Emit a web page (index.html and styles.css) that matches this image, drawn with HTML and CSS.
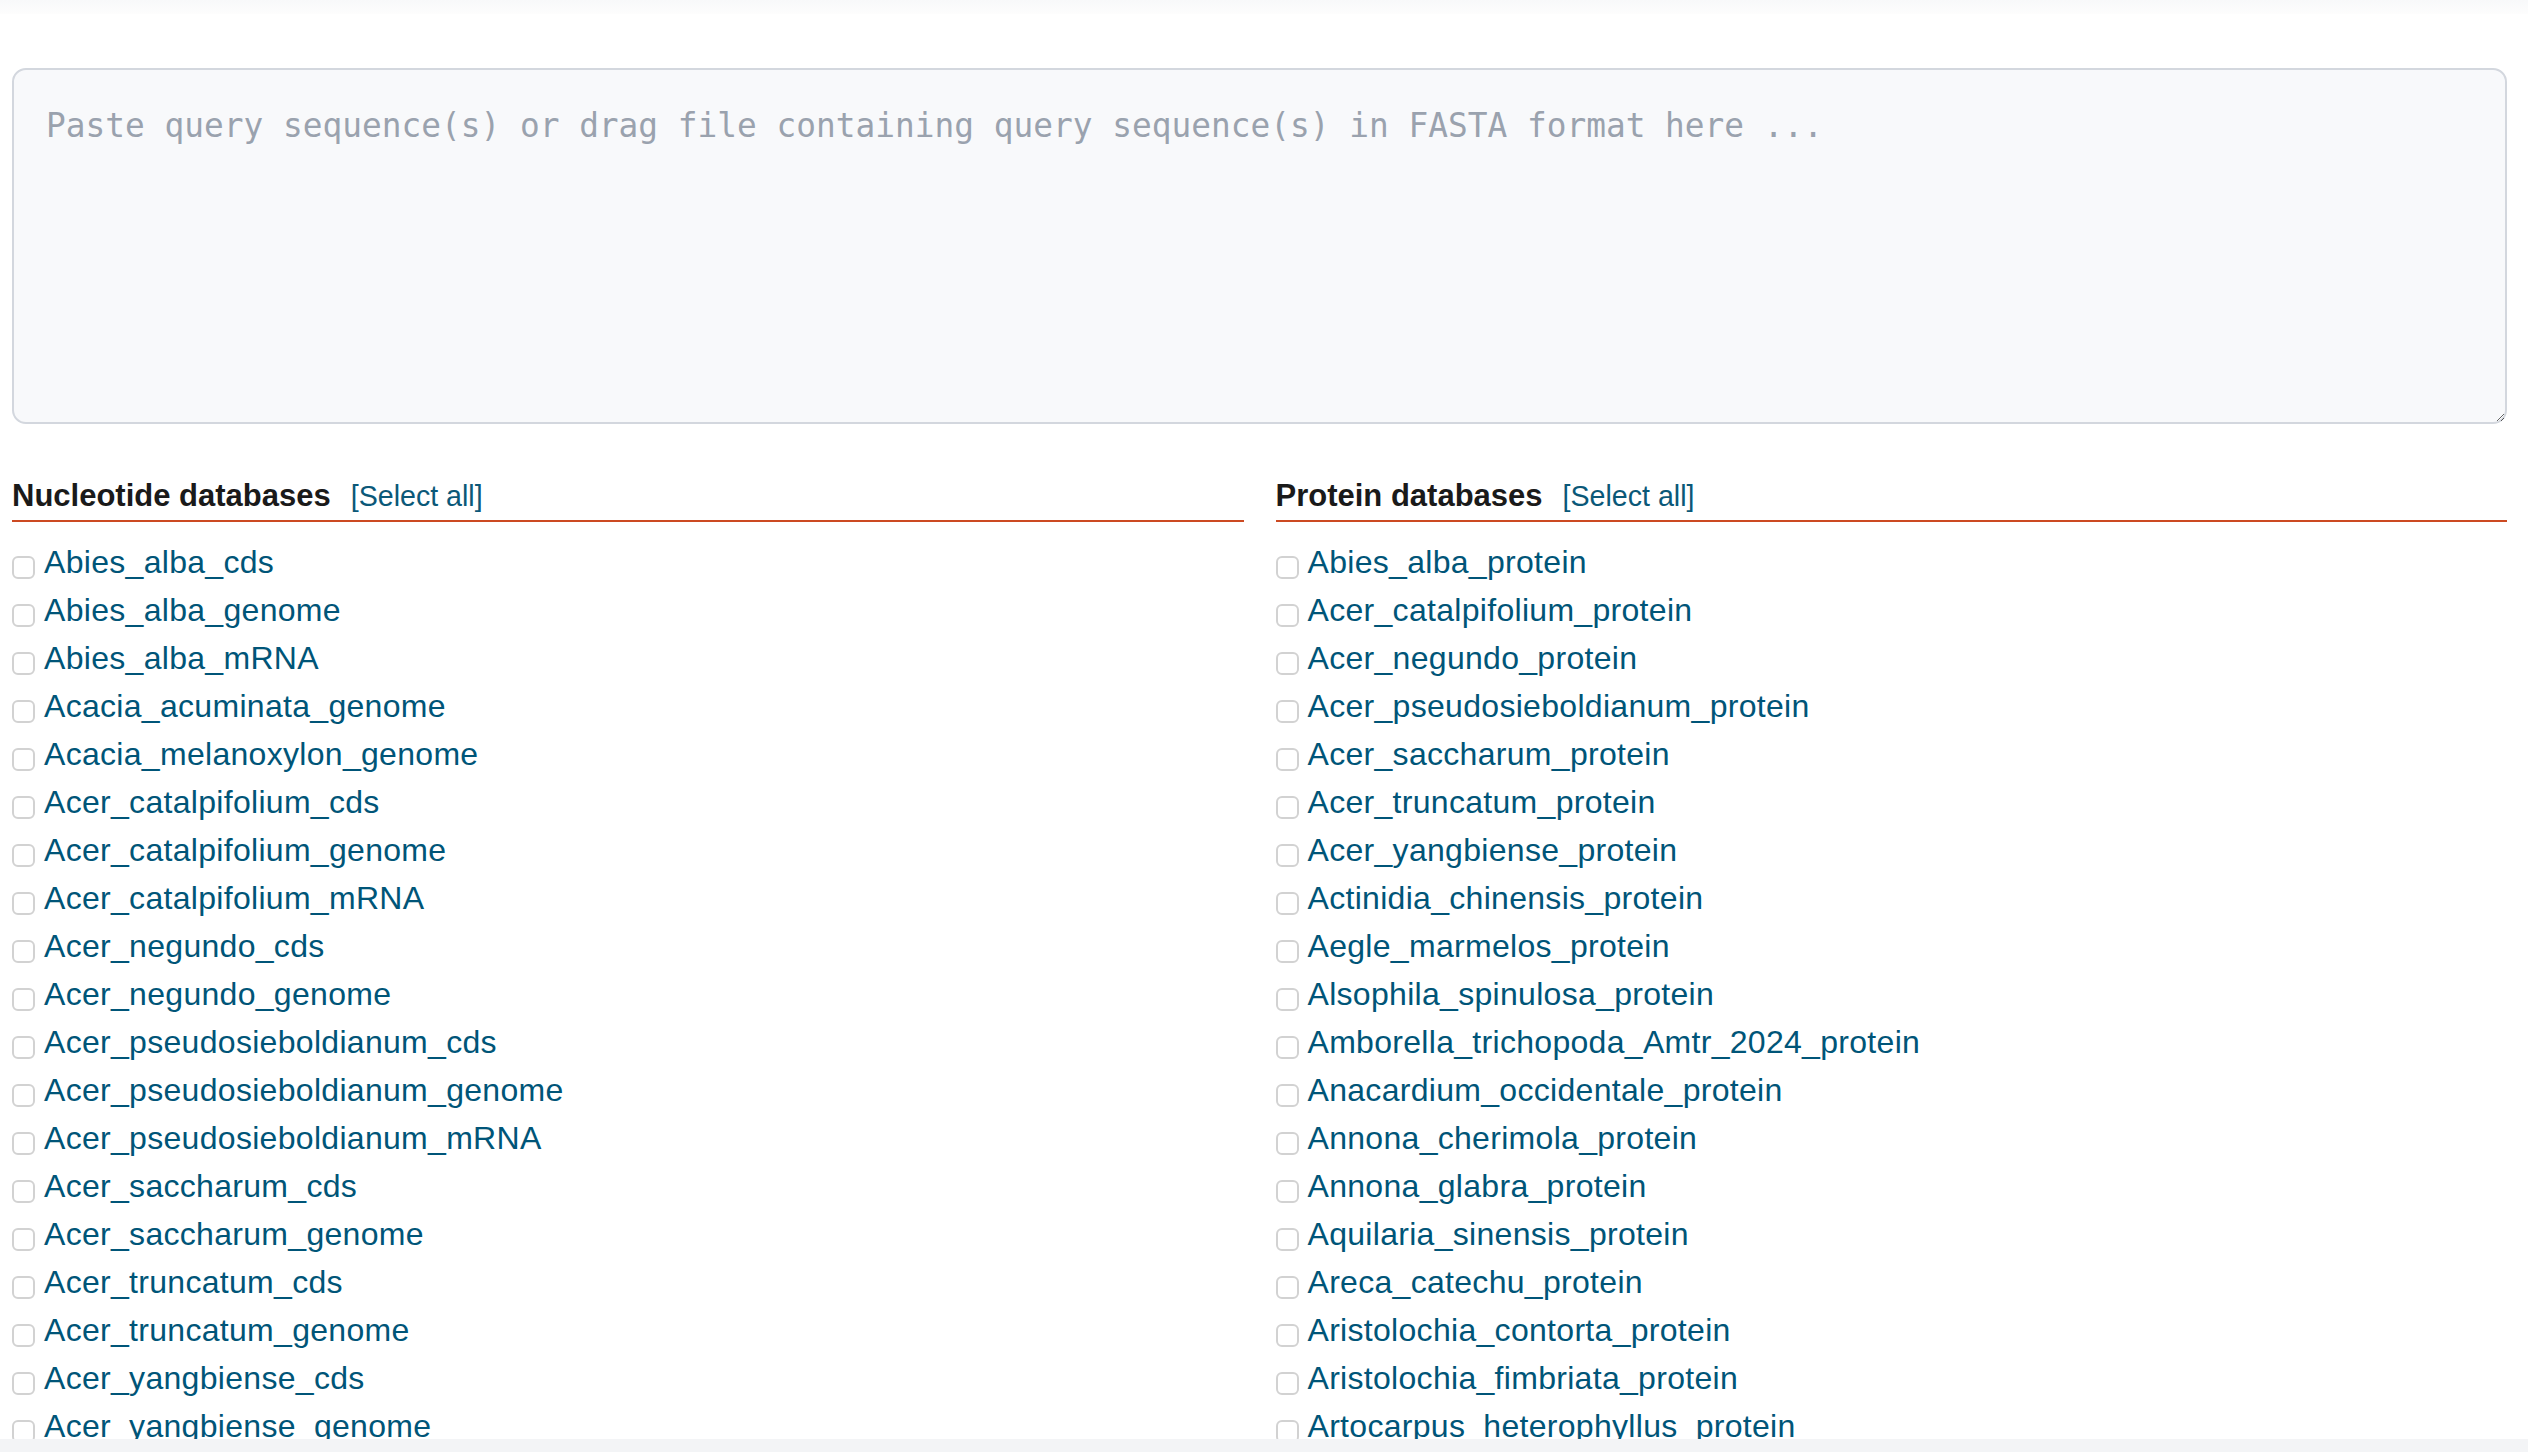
FILE: index.html
```html
<!DOCTYPE html>
<html lang="en">
<head>
  <meta charset="UTF-8" />
  <meta name="viewport" content="width=device-width, initial-scale=1.0"/>
  <title>BLAST search</title>
  <link rel="stylesheet" href="styles.css">
</head>
<body>
  <div class="top-shade"></div>

  <main class="page">
    <!-- Query box -->
    <textarea class="query" placeholder="Paste query sequence(s) or drag file containing query sequence(s) in FASTA format here ..."></textarea>

    <div class="databases">
      <!-- Nucleotide databases -->
      <section class="db-column">
        <div class="db-heading">
          <h4>Nucleotide databases</h4>
          <a href="#" class="select-all">[Select all]</a>
        </div>
        <ul class="db-list">
          <li><label><input type="checkbox"> Abies_alba_cds</label></li>
          <li><label><input type="checkbox"> Abies_alba_genome</label></li>
          <li><label><input type="checkbox"> Abies_alba_mRNA</label></li>
          <li><label><input type="checkbox"> Acacia_acuminata_genome</label></li>
          <li><label><input type="checkbox"> Acacia_melanoxylon_genome</label></li>
          <li><label><input type="checkbox"> Acer_catalpifolium_cds</label></li>
          <li><label><input type="checkbox"> Acer_catalpifolium_genome</label></li>
          <li><label><input type="checkbox"> Acer_catalpifolium_mRNA</label></li>
          <li><label><input type="checkbox"> Acer_negundo_cds</label></li>
          <li><label><input type="checkbox"> Acer_negundo_genome</label></li>
          <li><label><input type="checkbox"> Acer_pseudosieboldianum_cds</label></li>
          <li><label><input type="checkbox"> Acer_pseudosieboldianum_genome</label></li>
          <li><label><input type="checkbox"> Acer_pseudosieboldianum_mRNA</label></li>
          <li><label><input type="checkbox"> Acer_saccharum_cds</label></li>
          <li><label><input type="checkbox"> Acer_saccharum_genome</label></li>
          <li><label><input type="checkbox"> Acer_truncatum_cds</label></li>
          <li><label><input type="checkbox"> Acer_truncatum_genome</label></li>
          <li><label><input type="checkbox"> Acer_yangbiense_cds</label></li>
          <li><label><input type="checkbox"> Acer_yangbiense_genome</label></li>
        </ul>
      </section>

      <!-- Protein databases -->
      <section class="db-column">
        <div class="db-heading">
          <h4>Protein databases</h4>
          <a href="#" class="select-all">[Select all]</a>
        </div>
        <ul class="db-list">
          <li><label><input type="checkbox"> Abies_alba_protein</label></li>
          <li><label><input type="checkbox"> Acer_catalpifolium_protein</label></li>
          <li><label><input type="checkbox"> Acer_negundo_protein</label></li>
          <li><label><input type="checkbox"> Acer_pseudosieboldianum_protein</label></li>
          <li><label><input type="checkbox"> Acer_saccharum_protein</label></li>
          <li><label><input type="checkbox"> Acer_truncatum_protein</label></li>
          <li><label><input type="checkbox"> Acer_yangbiense_protein</label></li>
          <li><label><input type="checkbox"> Actinidia_chinensis_protein</label></li>
          <li><label><input type="checkbox"> Aegle_marmelos_protein</label></li>
          <li><label><input type="checkbox"> Alsophila_spinulosa_protein</label></li>
          <li><label><input type="checkbox"> Amborella_trichopoda_Amtr_2024_protein</label></li>
          <li><label><input type="checkbox"> Anacardium_occidentale_protein</label></li>
          <li><label><input type="checkbox"> Annona_cherimola_protein</label></li>
          <li><label><input type="checkbox"> Annona_glabra_protein</label></li>
          <li><label><input type="checkbox"> Aquilaria_sinensis_protein</label></li>
          <li><label><input type="checkbox"> Areca_catechu_protein</label></li>
          <li><label><input type="checkbox"> Aristolochia_contorta_protein</label></li>
          <li><label><input type="checkbox"> Aristolochia_fimbriata_protein</label></li>
          <li><label><input type="checkbox"> Artocarpus_heterophyllus_protein</label></li>
        </ul>
      </section>
    </div>
  </main>

  <div class="bottom-bar"></div>
</body>
</html>
```

FILE: styles.css
```css
html, body {
  margin: 0;
  padding: 0;
  background: #fff;
  font-family: 'Liberation Sans', Arial, sans-serif;
  overflow: hidden;
}
.top-shade {
  height: 14px;
  background: linear-gradient(#f8f9fa, #fdfdfd);
}
.page {
  padding: 54px 21px 0 12px;
}
.query {
  display: block;
  box-sizing: border-box;
  width: 100%;
  height: 356px;
  margin: 0;
  padding: 32px 32px;
  border: 2px solid #d3d7de;
  border-radius: 14px;
  background: #f8f9fb;
  font-family: 'DejaVu Sans Mono', 'Liberation Mono', monospace;
  font-size: 32.8px;
  line-height: 1.5;
  color: #333;
}
.query::placeholder {
  color: #9aa2ae;
}
.databases {
  display: grid;
  grid-template-columns: 1fr 1fr;
  column-gap: 32px;
  margin-top: 48px;
}
.db-heading {
  display: flex;
  align-items: baseline;
  gap: 20px;
  border-bottom: 2px solid #cc4a22;
}
.db-heading h4 {
  margin: 0;
  font-size: 31px;
  font-weight: 700;
  line-height: 48px;
  color: #1a1a1a;
}
.select-all {
  font-size: 28.6px;
  color: #0b5878;
  text-decoration: none;
}
.db-list {
  list-style: none;
  margin: 16px 0 0;
  padding: 0;
}
.db-list li {
  font-size: 32px;
  line-height: 48px;
  letter-spacing: 0.3px;
}
.db-list label {
  display: flex;
  align-items: center;
  color: #005578;
}
.db-list input[type=checkbox] {
  appearance: none;
  -webkit-appearance: none;
  box-sizing: border-box;
  width: 23px;
  height: 23px;
  margin: 10px 9px 0 0;
  border: 2px solid #d2d2d2;
  border-radius: 6px;
  background: #fff;
  flex-shrink: 0;
}
.bottom-bar {
  position: fixed;
  left: 0;
  right: 0;
  bottom: 0;
  height: 13px;
  background: #f3f4f6;
}
```
